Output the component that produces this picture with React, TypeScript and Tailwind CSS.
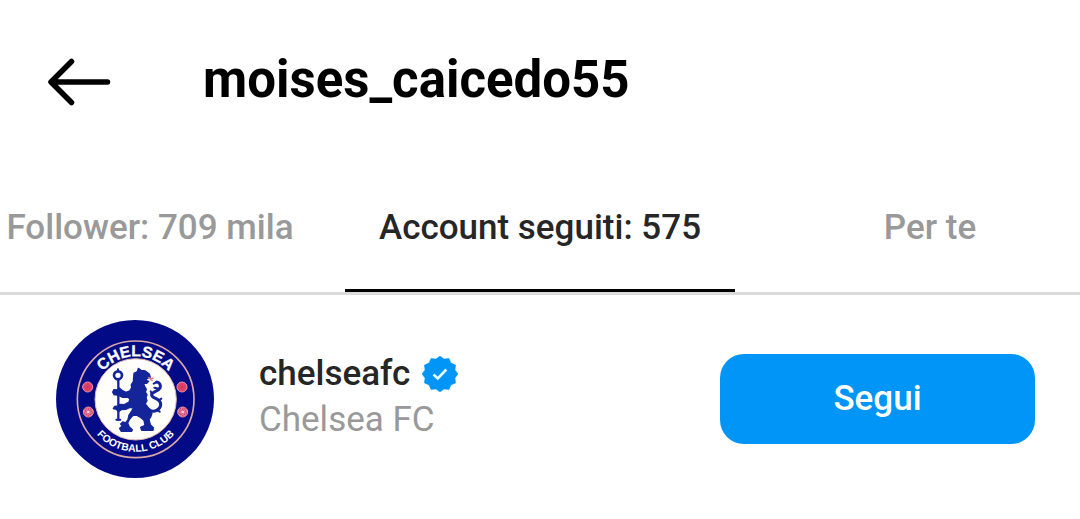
const tabs = [
	{ label: "Follower: 709 mila", active: false },
	{ label: "Account seguiti: 575", active: true },
	{ label: "Per te", active: false },
]

function BackIcon() {
	return (
		<svg viewBox="0 0 64 48" className="h-12 w-16" fill="none" stroke="currentColor" strokeWidth="5.500" strokeLinecap="round" strokeLinejoin="round">
			<path d="M23.500 3.500 3 24l20.500 20.500M4 24h55.500" />
		</svg>
	)
}

function VerifiedIcon() {
	const points = Array.from({ length: 24 }, (_, i) => {
		const r = i % 2 === 0 ? 18 : 15.500
		const a = (i * Math.PI) / 12
		return `${18 + r * Math.sin(a)},${18 - r * Math.cos(a)}`
	}).join(" ")

	return (
		<svg viewBox="0 0 36 36" className="size-9" role="img" aria-label="Verificato">
			<polygon points={points} fill="#0095f6" stroke="#0095f6" strokeWidth="0.500" strokeLinejoin="round" />
			<path d="m11.500 18.500 4.300 4 8.500-9" fill="none" stroke="#e8fbff" strokeWidth="2.600" />
		</svg>
	)
}

function Rosette({ x, y, ball = false }: { x: number; y: number; ball?: boolean }) {
	return (
		<g transform={`translate(${x} ${y})`}>
			<circle r="15" fill={ball ? "#e2476b" : "#c8406f"} stroke="#f08fa0" strokeWidth="3" />
			{ball ? (
				<path d="M-8-8 8 8M8-8-8 8M0-12v24M-12 0h24" stroke="#cf3560" strokeWidth="2" />
			) : (
				<>
					{[0, 72, 144, 216, 288].map((deg) => (
						<circle key={deg} cy="-9" r="4" fill="none" stroke="#f79fae" strokeWidth="2" transform={`rotate(${deg})`} />
					))}
					<circle r="4" fill="#ffd5d5" />
				</>
			)}
		</g>
	)
}

function Crest() {
	return (
		<svg viewBox="18 18 474 474" className="size-[158px] shrink-0" role="img" aria-label="Chelsea FC">
			<defs>
				<path id="arc-top" d="M127 257a130 130 0 0 1 260 0" />
				<path id="arc-bottom" d="M100 256a157 157 0 0 0 314 0" />
			</defs>
			<circle cx="255" cy="255" r="237" fill="#020a86" />
			<circle cx="257" cy="256" r="175" fill="#020a86" stroke="#d9a7a5" strokeWidth="5" />
			<circle cx="257" cy="256" r="122" fill="#fffefa" stroke="#e5b9b4" strokeWidth="3" />
			<g fill="#fff" textAnchor="middle" className="font-['Liberation_Sans',sans-serif] font-bold">
				<text fontSize="47" stroke="#fff" strokeWidth="1">
					<textPath href="#arc-top" startOffset="50%">CHELSEA</textPath>
				</text>
				<text fontSize="31">
					<textPath href="#arc-bottom" startOffset="50%">FOOTBALL CLUB</textPath>
				</text>
			</g>
			<Rosette x={113} y={219} ball />
			<Rosette x={396} y={219} ball />
			<Rosette x={115} y={294} />
			<Rosette x={398} y={294} />
			{/* staff */}
			<g fill="none" stroke="#14259a" strokeLinecap="round">
				<circle cx="204" cy="184" r="12" strokeWidth="8" />
				<path d="M205 198v120" strokeWidth="7" />
				<path d="M199 317h12M204 166v5" strokeWidth="6" />
			</g>
			{/* lion */}
			<path
				fill="#14259a"
				stroke="#14259a"
				strokeWidth="4"
				strokeLinejoin="round"
				d="M252 178l10-5 3-10 8 6 13 2 12 9 3 10-9 3-5 5 9 4-6 6-10-1 4 10 5 9-3 8 5 8-3 9 3 9-5 9 3 8 9 8 8 12-3 10-6 9 4 16 9 9-1 8h-34l-3-9 13-6-3-15-9-8-14-8-11 2-10 12-5 10 5 12 9 8-2 5h-31l-5-9 8-7-5-6 6-6 9 3 7-10 3-14 8-12 5-9-10-2-13 6-13 1-9 6-6-7-9-2 4-7 11-1 4-5 14 1 14-8 3-9-8-6-14 1-12-6-14-2-4-8 4-7 11 1 5-6 8 7 12 6 11-4 6-10-1-9 6-9Z"
			/>
			{/* tail */}
			<g fill="none" stroke="#14259a" strokeLinecap="round" strokeLinejoin="round">
				<path d="M288 276c9 16 22 18 32 13 14-7 16-23 5-31-9-7-21-7-20-17 2-9 20-9 25-19 4-8-2-18-10-18" strokeWidth="9" />
				<path d="M321 204l-10 5M327 224l-14-3M305 239l-3-7M326 259l8-5M321 288l8 5" strokeWidth="6" />
			</g>
			<path d="m294 190 9 4 8-2M300 196l8 4" fill="none" stroke="#e97884" strokeWidth="4" />
		</svg>
	)
}

export default function App() {
	return (
		<main className="min-h-screen bg-white font-[Roboto,sans-serif]">
			<header className="flex items-center gap-[91px] py-[54px] pl-12">
				<button type="button" aria-label="Indietro" className="pt-1 text-black">
					<BackIcon />
				</button>
				<h1 className="text-[51px] leading-11 font-bold text-black">moises_caicedo55</h1>
			</header>

			<nav className="flex justify-center overflow-hidden border-b-3 border-[#dbdbdb]">
				{tabs.map((tab) => (
					<button
						key={tab.label}
						type="button"
						aria-current={tab.active ? "page" : undefined}
						className={
							tab.active
								? "h-33 w-[390px] shrink-0 border-b-3 border-black pt-2 text-[35px] font-medium text-[#262626]"
								: "h-33 w-[390px] shrink-0 border-b-3 border-transparent pt-2 text-[35px] font-medium text-[#999999]"
						}
					>
						{tab.label}
					</button>
				))}
			</nav>

			<section className="flex items-center gap-[45px] pt-[25px] pr-[45px] pl-14">
				<Crest />
				<div className="flex min-w-0 flex-1 flex-col pb-1">
					<div className="flex items-center gap-3">
						<span className="text-[35px] leading-[46px] font-medium text-[#262626]">chelseafc</span>
						<VerifiedIcon />
					</div>
					<span className="text-[35px] leading-[46px] text-[#999999]">Chelsea FC</span>
				</div>
				<button type="button" className="h-[90px] w-[315px] rounded-3xl bg-[#0095f6] text-[35px] font-medium text-white">
					Segui
				</button>
			</section>
		</main>
	)
}
